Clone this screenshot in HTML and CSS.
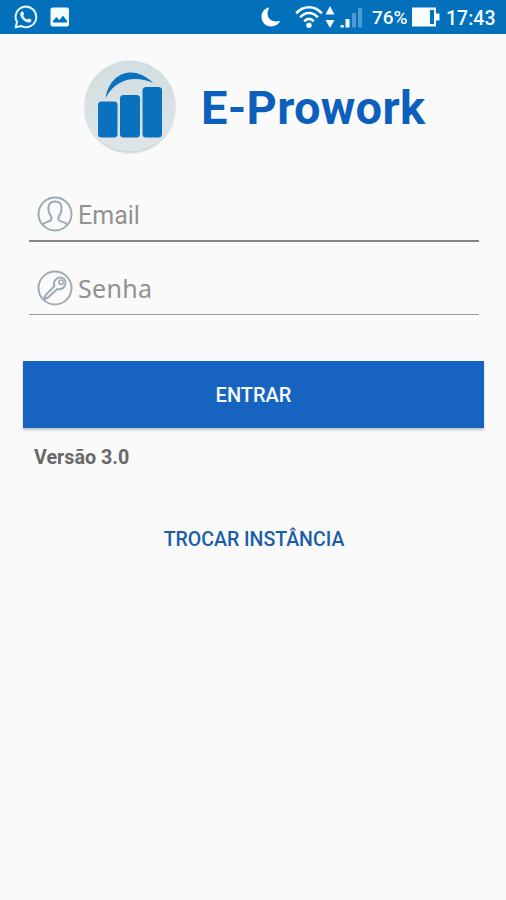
FILE: index.html
```html
<!DOCTYPE html>
<html lang="pt-BR">
<head>
<meta charset="utf-8">
<title>E-Prowork</title>
<link rel="stylesheet" href="styles.css">
</head>
<body>
<header class="status">
  <svg class="ic-wa" width="24" height="24" viewBox="0 0 24 24" fill="none">
    <path d="M1.6 22.4 3 17.1A10.3 10.3 0 1 1 7 21Z" stroke="#e6f5ff" stroke-width="2" stroke-linejoin="round"/>
    <path d="M7.2 7c.7-.9 1.7-.8 2 0l.9 2c.2.6-.7 1.2-.9 1.7.8 1.8 2.100 3 4 3.800.6-.2 1.100-1.300 1.700-1.100l2.100 1c.9.4.3 2-.5 2.600-3.500 2.300-9.700-3.200-10.200-7C6.100 8.900 6.500 7.800 7.200 7Z" fill="#e6f5ff"/>
  </svg>
  <svg class="ic-pic" width="20" height="20" viewBox="0 0 20 20">
    <rect x=".5" y=".5" width="18.500" height="19" rx="2" fill="#f4fbff"/>
    <path d="M3 15.500V14l3.500-4 2.800 3.200 3.700-4.400 4 5v1.700Z" fill="#0270ba"/>
  </svg>
  <svg class="ic-moon" width="20" height="20" viewBox="0 0 20 20">
    <path d="M8.500.5C3.800 1 .5 4.700.5 9.800c0 5.500 4 9.700 9.500 9.700 4.300 0 7.700-2.200 9.300-5.700C12.500 16 7 12.500 6.600 7.500c-.2-2.800.5-5 1.900-7Z" fill="#fff"/>
  </svg>
  <svg class="ic-wifi" width="28" height="24" viewBox="0 0 28 24" fill="none" stroke="#f4fbff" stroke-width="2.600">
    <path d="M1.200 8.300C8.500.3 19.500.3 26.800 8.300M5.200 12.300c5-5.700 12.600-5.700 17.600 0M9.200 16.300c2.800-3.200 6.800-3.200 9.600 0"/>
    <circle cx="14" cy="20.300" r="2.700" fill="#f4fbff" stroke="none"/>
  </svg>
  <svg class="ic-data" width="10" height="22" viewBox="0 0 10 22" fill="#f4fbff"><path d="M5 0l4.500 8.500h-9ZM5 22l4.500-8h-9Z"/></svg>
  <svg class="ic-signal" width="23" height="21" viewBox="0 0 23 21">
    <path d="M.5 18h3.300v2.500H.5ZM5.500 12h4v8.500h-4Z" fill="#f4fbff"/>
    <path d="M12 6h4v14.500h-4ZM18 1h4.200v19.500H18Z" fill="#4b9bd2"/>
  </svg>
  <span class="pct">76%</span>
  <svg class="ic-bat" width="29" height="20" viewBox="0 0 29 20">
    <path d="M0 .5h24v6h3.500v7H24v6H0Z" fill="#f8fcff"/><path d="M18 3h4v14h-4Z" fill="#0270ba"/>
  </svg>
  <span class="time">17:43</span>
</header>
<main>
  <div class="brand">
    <svg class="logo" width="96" height="98" viewBox="0 0 96 98">
      <defs><linearGradient id="disc" x1="0" y1="0" x2="0" y2="1"><stop offset="0" stop-color="#d2dee1"/><stop offset="1" stop-color="#dee5e8"/></linearGradient></defs>
      <circle class="disc-shadow" cx="48" cy="49" r="45"/>
      <circle cx="48" cy="47" r="45.500" fill="url(#disc)"/>
      <path d="M23.800 39C27 15 51 4 71 24 54 16.500 34 19 23.800 39Z" fill="#0971bd"/>
      <g fill="#0971bd"><rect x="16" y="42.500" width="19.500" height="36" rx="3.500"/><rect x="38" y="36" width="20" height="42.500" rx="3.500"/><rect x="60.500" y="28" width="19.500" height="50.500" rx="3.500"/></g>
    </svg>
    <h1>E-Prowork</h1>
  </div>
  <div class="field email">
    <svg width="36" height="36" viewBox="0 0 36 36" fill="none" stroke="#9bacb3" stroke-width="2">
      <circle cx="18" cy="18" r="16.500"/>
      <path d="M5.500 28.500c1.300-2.400 7.500-2.700 8.700-4.600.8-1.300.2-3-.8-4.500C10.800 15.500 9.500 5.500 18 5.500s7.200 10 4.600 13.900c-1 1.500-1.600 3.200-.8 4.500 1.200 1.900 7.400 2.200 8.700 4.600"/>
    </svg>
    <span>Email</span>
  </div>
  <div class="field senha">
    <svg width="36" height="36" viewBox="0 0 36 36" fill="none" stroke="#9fabb6" stroke-width="2">
      <circle cx="18" cy="18" r="16.500"/>
      <path d="M6.500 29.500 9 24.500l8.300-8.300c-1.300-5.300 2-8.700 6-8.700 3 0 5.200 2.300 5.200 5.200 0 4.500-3.600 7.300-8.200 6.300L11 27.500Z" stroke-linejoin="round"/>
      <circle cx="24" cy="12.300" r="2.200" stroke-width="1.500"/>
    </svg>
    <span>Senha</span>
  </div>
  <button class="enter">ENTRAR</button>
  <div class="version">Versão 3.0</div>
  <button class="switch">TROCAR INSTÂNCIA</button>
</main>
</body>
</html>
```
FILE: styles.css
```css
* { box-sizing: border-box; }
body { margin: 0; width: 506px; height: 900px; background: #fafafa; font-family: Roboto, "Liberation Sans", sans-serif; overflow: hidden; }
svg { display: block; flex: none; }
button { display: block; border: 0; padding: 0; font-family: inherit; }
.status { height: 34px; background: #0270ba; color: #f4fbff; display: flex; align-items: center; padding-left: 14px; white-space: nowrap; }
.ic-pic { margin-left: 12px; }
.ic-moon { margin-left: 191px; }
.ic-wifi { margin-left: 14px; }
.ic-data { margin-left: 2px; }
.ic-signal { margin-left: 5px; }
.pct { width: 37px; margin-left: 9px; font-size: 19px; font-weight: 500; line-height: 24px; padding-top: 2px; }
.ic-bat { margin-left: 3px; }
.time { margin-left: 5px; font-size: 19.500px; font-weight: 500; line-height: 24px; padding-top: 4px; }
.brand { display: flex; align-items: center; height: 146px; padding-left: 82px; }
.logo { margin-top: 2px; }
.disc-shadow { fill: #c3c8ca; filter: blur(1px); }
h1 { margin: 1px 0 0 23px; color: #0d5fbd; font-size: 47px; line-height: 56px; font-weight: 700; letter-spacing: .3px; white-space: nowrap; }
.field { display: flex; align-items: center; margin-left: 29px; width: 450px; padding-left: 8px; color: #929292; font-size: 25px; line-height: 32px; }
.field span { margin-left: 5px; }
.email { height: 62px; padding-top: 7px; border-bottom: 2px solid #8a8585; }
.email span { margin-top: 5px; }
.senha { height: 73px; padding-top: 19px; border-bottom: 1px solid #9a9a9a; font-family: "Noto Sans", sans-serif; }
.senha span { letter-spacing: .3px; }
.enter { width: 461px; height: 67px; margin: 46px 0 0 23px; background: #1764c0; color: #f7fbff; font-size: 20px; font-weight: 500; padding-top: 1px; box-shadow: 0 2px 2px #b9c3d0; }
.version { margin: 18px 0 0 34px; color: #686868; font-size: 19.700px; line-height: 24px; font-weight: 700; }
.switch { margin: 58px auto 0; background: none; color: #1a5dab; font-size: 19.500px; line-height: 24px; font-weight: 500; position: relative; left: 1px; }
```
